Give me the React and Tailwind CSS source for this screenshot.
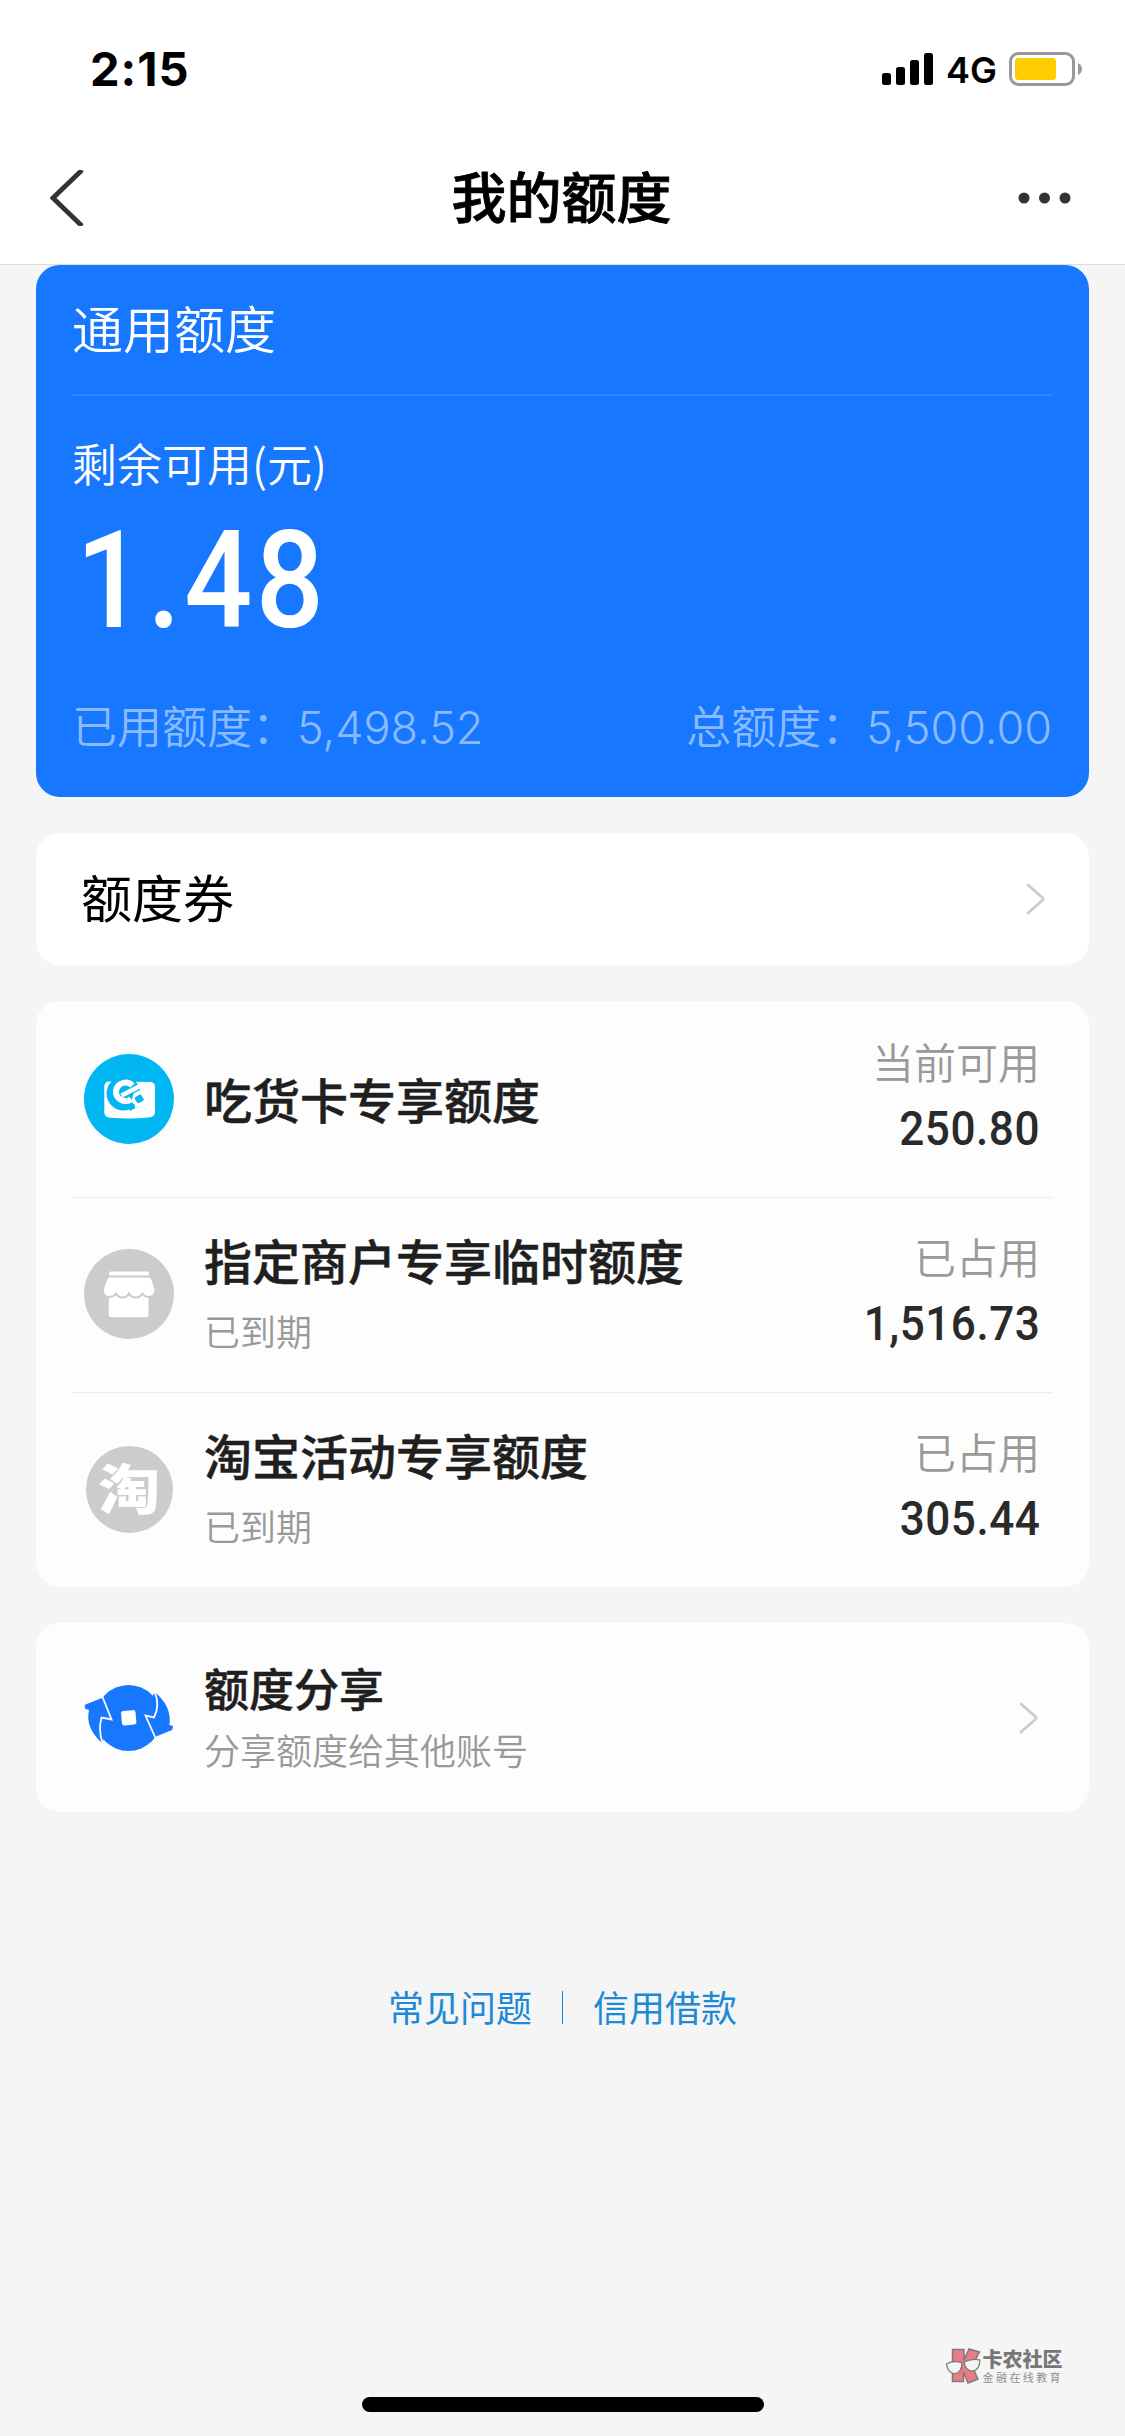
const quotas = [
  {
    name: "吃货卡专享额度",
    icon: "foodie",
    label: "当前可用",
    amount: "250.80",
  },
  {
    name: "指定商户专享临时额度",
    note: "已到期",
    icon: "shop",
    label: "已占用",
    amount: "1,516.73",
  },
  {
    name: "淘宝活动专享额度",
    note: "已到期",
    icon: "taobao",
    label: "已占用",
    amount: "305.44",
  },
];

function Chevron() {
  return (
    <svg viewBox="0 0 20 32" className="w-5 h-8">
      <path
        d="M2 2 L16.500 14.800 Q17.800 16 16.500 17.200 L2 30"
        fill="none"
        stroke="#ccc"
        strokeWidth="2.800"
        strokeLinecap="round"
      />
    </svg>
  );
}

function FoodieIcon() {
  return (
    <svg viewBox="0 0 90 90" className="w-[90px] h-[90px]">
      <circle cx="45" cy="45" r="45" fill="#00b7f4" />
      <path
        d="M26 27.500 C22 27.500 20.300 29.500 20.300 33 V57 C20.300 61.500 22 63.300 26 63.800 Q45.500 65.500 65 63.500 C69.500 63 71 61 71 57 V33.500 C71 29.500 69.500 28 65.500 28 Z"
        fill="#fff"
      />
      <circle cx="39.500" cy="39.500" r="17" fill="#00b7f4" />
      {/* e */}
      <path
        d="M48.500 31.500 C43.500 26.500 34.500 28 32.300 35.500 C30.500 43.500 38.500 50 47 45.500"
        fill="none"
        stroke="#fff"
        strokeWidth="6"
      />
      <path d="M37.500 41.500 L60 30" fill="none" stroke="#fff" strokeWidth="4.500" />
      <path d="M50 39 L62 33 L64 52 L55 56 L47 47 Z" fill="#fff" />
      <rect
        x="51.500"
        y="41.500"
        width="7.500"
        height="7"
        rx="1.500"
        fill="#00b7f4"
        transform="rotate(-32 55 45)"
      />
      <path d="M44 52 L49.500 50 L51.500 54 L46 57 Z" fill="#00b7f4" />
    </svg>
  );
}

function ShopIcon() {
  return (
    <svg viewBox="0 0 90 90" className="w-[90px] h-[90px]">
      <circle cx="45" cy="45" r="45" fill="#ccc" />
      <rect x="25" y="22.500" width="40" height="4.500" rx="2" fill="#fff" />
      <rect x="24.800" y="44" width="39.700" height="24.300" rx="2.500" fill="#fff" />
      <path
        d="M25 27.500 H65 Q67.500 28 68.500 31 L71.500 40 Q71.500 48 65 48 Q60.500 48 58.300 44.500 Q56 48.500 51.500 48.500 Q47 48.500 45 44.500 Q43 48.500 38.500 48.500 Q34 48.500 32 44.500 Q30 48 25 48 Q18.500 48 19 40 L22 31 Q23 28 25 27.500 Z"
        fill="#fff"
        stroke="#ccc"
        strokeWidth="2"
      />
    </svg>
  );
}

function TaobaoIcon() {
  return (
    <div className="w-[87px] h-[87px] mx-[1.5px] rounded-full bg-[#ccc] flex items-center justify-center">
      <span className="text-white text-[54px] leading-none font-black -mt-1 scale-x-115">
        淘
      </span>
    </div>
  );
}

function ShareIcon() {
  return (
    <svg viewBox="0 0 90 68" className="w-[90px] h-[68px]">
      <circle cx="44.500" cy="34" r="33" fill="#1777ff" />
      {/* arrows around the coin */}
      <path
        d="M18 14 L1.500 20.500 Q0 22 1.500 25 L5 26 Q1 44 18 59 L28 35 Z"
        fill="#1777ff"
      />
      <path
        d="M70.500 8 Q88 22 85.500 41 L89 42 Q89 44 88 46 L71 53 L60 33 Z"
        fill="#1777ff"
      />
      <path
        d="M18.500 13 L27.500 35.500 L17.500 33.500 Q14 46 18.700 60"
        fill="none"
        stroke="#fdfdfd"
        strokeWidth="1.800"
      />
      <path
        d="M70.300 7 Q76.500 21 70 33.500 L61.500 31.500 L71.500 54"
        fill="none"
        stroke="#fdfdfd"
        strokeWidth="1.800"
      />
      <rect
        x="37.500"
        y="26.500"
        width="14.500"
        height="14.500"
        rx="2.500"
        fill="#fff"
        transform="rotate(-5 45 34)"
      />
    </svg>
  );
}

function QuotaIcon({ type }) {
  if (type === "foodie") return <FoodieIcon />;
  if (type === "shop") return <ShopIcon />;
  return <TaobaoIcon />;
}

function StatusBar() {
  return (
    <div className="h-[138px] flex items-center justify-between pl-[90px] pr-[43px] text-black">
      <span className="font-['Inter'] font-bold text-[47px] leading-none tracking-[1px] pb-0.5">
        2:15
      </span>
      <div className="flex items-center">
        <svg viewBox="0 0 51 32" className="w-[51px] h-8">
          <rect x="0" y="20" width="9" height="12" rx="2.500" />
          <rect x="14" y="14" width="9" height="18" rx="2.500" />
          <rect x="28" y="7" width="9" height="25" rx="2.500" />
          <rect x="42" y="0" width="9" height="32" rx="2.500" />
        </svg>
        <span className="font-['Inter'] font-semibold text-[36px] leading-none ml-[13px] w-[50px] pt-0.5">
          4G
        </span>
        <svg viewBox="0 0 73 34" className="w-[73px] h-[34px] ml-[13px]">
          <rect
            x="1.500"
            y="1.500"
            width="63"
            height="31"
            rx="8"
            fill="none"
            stroke="#999"
            strokeWidth="3"
          />
          <rect x="6" y="6" width="41" height="22" rx="3.500" fill="#ffcc00" />
          <path d="M69 11 Q73 13 73 17 Q73 21 69 23 Z" fill="#999" />
        </svg>
      </div>
    </div>
  );
}

export default function App() {
  return (
    <div className="w-[1125px] h-[2436px] bg-[#f5f5f5] flex flex-col overflow-hidden font-['Noto_Sans_CJK_SC',sans-serif]">
      {/* HEADER */}
      <header className="bg-white border-b border-[#ddd] h-[265px] shrink-0">
        <StatusBar />
        <div className="h-[120px] grid grid-cols-[1fr_auto_1fr] items-center pl-[50px] pr-[52px]">
          <svg viewBox="0 0 34 56" className="w-[34px] h-14">
            <path
              d="M32 0 L3 28 L32 56"
              fill="none"
              stroke="#333"
              strokeWidth="4.800"
            />
          </svg>
          <h1 className="text-[55px] leading-none font-medium text-black pb-[7px] [-webkit-text-stroke:0.8px]">
            我的额度
          </h1>
          <svg viewBox="0 0 53 12" className="w-[53px] h-3 justify-self-end mr-[2px]">
            <circle cx="6" cy="6" r="5.500" fill="#333" />
            <circle cx="26.500" cy="6" r="5.500" fill="#333" />
            <circle cx="47" cy="6" r="5.500" fill="#333" />
          </svg>
        </div>
      </header>

      <main className="px-9 flex flex-col gap-9">
        {/* TOTAL */}
        <section className="h-[532px] bg-[#1777ff] rounded-3xl px-9 text-white flex flex-col">
          <h2 className="h-[131px] border-b-2 border-[#2f85ff] pt-[37px] text-[51px] leading-[51px] font-[350]">
            通用额度
          </h2>
          <p className="mt-[44px] text-[45px] leading-[45px] font-[350]">
            剩余可用(元)
          </p>
          <p className="mt-[36px] ml-1 h-[120px] origin-left scale-x-88 font-['Roboto'] font-medium text-[136px] leading-[120px] tracking-[4px]">
            1.48
          </p>
          <div className="mt-[61px] flex justify-between pr-px text-[45px] leading-[45px] font-[350] text-[#8bbbff]">
            <p>
              已用额度：
              <span className="font-['Inter'] font-light">5,498.52</span>
            </p>
            <p>
              总额度：
              <span className="font-['Inter'] font-light">5,500.00</span>
            </p>
          </div>
        </section>

        {/* COUPON */}
        <section className="h-[132px] bg-white rounded-3xl pl-[45px] pr-[43px] flex items-center justify-between">
          <h2 className="text-[51px] leading-none text-black pb-[5px]">额度券</h2>
          <Chevron />
        </section>

        {/* QUOTAS */}
        <section className="h-[586px] bg-[#fdfdfd] rounded-3xl px-9">
          {quotas.map((q, i) => (
            <div
              key={q.name}
              className={`flex items-center pl-3 pr-[13px] ${
                i > 0 ? "h-[195px] border-t border-[#ececec] pb-0.5" : "h-[196px]"
              }`}
            >
              <QuotaIcon type={q.icon} />
              <div className="ml-[30px] flex-1 pb-[3px]">
                <h3 className="text-[48px] leading-[60px] font-medium text-[#1f1f1f] [-webkit-text-stroke:0.5px]">
                  {q.name}
                </h3>
                {q.note && (
                  <p className="mt-[14px] text-[36px] leading-[54px] font-[350] text-[#999]">
                    {q.note}
                  </p>
                )}
              </div>
              <div className="text-right pb-[5px]">
                <p className="text-[42px] leading-[60px] font-[350] text-[#999]">
                  {q.label}
                </p>
                <p className="mt-[5px] origin-right scale-x-90 font-['Roboto'] font-medium text-[49px] leading-[66px] tracking-[0.6px] text-[#2a2a2a]">
                  {q.amount}
                </p>
              </div>
            </div>
          ))}
        </section>

        {/* SHARE */}
        <section className="h-[189px] bg-[#fdfdfd] rounded-3xl pl-12 pr-[50px] flex items-center">
          <ShareIcon />
          <div className="ml-[30px] flex-1 pb-px">
            <h3 className="text-[45px] leading-[60px] font-medium text-[#1f1f1f] [-webkit-text-stroke:0.5px]">
              额度分享
            </h3>
            <p className="mt-1 text-[36px] leading-[54px] font-[350] text-[#999]">
              分享额度给其他账号
            </p>
          </div>
          <Chevron />
        </section>
      </main>

      {/* LINKS */}
      <nav className="mt-[175px] flex items-center justify-center gap-[30px] text-[36px] leading-9 text-[#2089d5]">
        <a>常见问题</a>
        <span className="w-px h-[33px] mt-1 bg-[#2089d5]" />
        <a>信用借款</a>
      </nav>

      <footer className="mt-auto">
        <div className="flex items-center justify-end pr-[62px]">
          <svg viewBox="0 0 35 36" className="w-[35px] h-9">
            <path
              d="M6.500 1.500 H18 V12 L23 1 L33.500 4 L26 18 L32 31 L22 35 L17.500 24 V33.500 H6.500 Z"
              fill="#e87c87"
              stroke="#857779"
              strokeWidth="1.500"
            />
            <path
              d="M0.500 16 Q8 12 16 15 Q15.500 25 9 25.500 Q2 25.500 0.500 16 Z M18 14 Q26 10 34 12 Q33.500 22 27 23 Q20 23.500 18 14 Z"
              fill="#f4f4f4"
              stroke="#777"
              strokeWidth="1.200"
            />
          </svg>
          <div className="ml-[2px]">
            <p className="text-[20px] leading-[20px] font-black text-[#777]">
              卡农社区
            </p>
            <p className="mt-[3px] text-[11px] leading-[11px] tracking-[2.4px] text-[#909090]">
              金融在线教育
            </p>
          </div>
        </div>
        <div className="mt-[13px] mb-6 mx-auto w-[402px] h-[15px] rounded-full bg-black" />
      </footer>
    </div>
  );
}
